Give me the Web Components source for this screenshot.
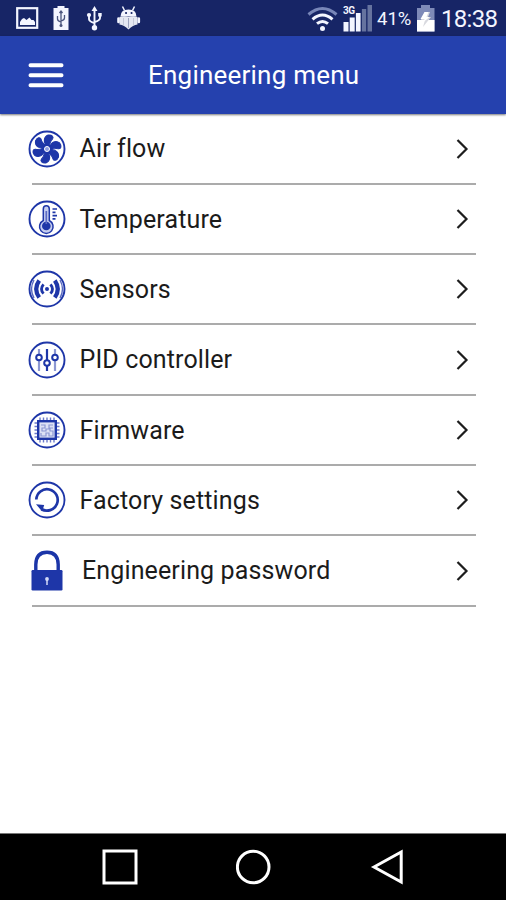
<!DOCTYPE html>
<html lang="en"><head><meta charset="utf-8"><title>Engineering menu</title>
<style>html,body{margin:0;height:100%;overflow:hidden;background:#fff;font-family:Roboto,"Liberation Sans",sans-serif}</style></head>
<body><engineering-app></engineering-app>
<script>
const define=(name,html)=>customElements.define(name,class extends HTMLElement{
  constructor(){super();this.attachShadow({mode:'open'}).innerHTML=html;}
});

define('status-bar',`<style>
:host{display:flex;height:36px;background:#172566;color:#f3f5ff;align-items:center;box-sizing:border-box;padding:0 9px 0 16px}
svg{display:block;flex:none}.gap{flex:1}
.pct{font-size:18.5px;line-height:36px;width:34px;margin:2px 6px 0 4px;white-space:nowrap}
.time{font-size:24px;line-height:36px;margin:2px 0 0 6px;white-space:nowrap;width:56px;letter-spacing:-.7px}
</style>
<svg width="126" height="36" viewBox="16 0 126 36" fill="none" stroke="#f3f5ff">
<rect x="17.2" y="8.2" width="20" height="19.6" stroke-width="2.2"/>
<path d="M20 25v-3l2-3 2-1 2.500 2 3-2.500 2 2.500 2 0 1.500 2v3z" fill="#f3f5ff" stroke="none"/>
<path d="M57.500 6h7v2h4v22h-15V8h4z" fill="#f3f5ff" stroke="none"/>
<path d="M61 11v15M57.500 16v3q0 2 3.500 3M64.500 15v3q0 2-3.500 3M59.500 13l1.500-2 1.500 2" stroke="#4c567f" stroke-width="1.300"/><circle cx="61" cy="25.500" r="1.500" fill="#4c567f" stroke="none"/>
<path d="M94.500 10v18M89 15.500v3.500q0 2.500 5.500 4M100 14.500v3.500q0 2.500-5.500 4" stroke-width="1.900"/>
<path d="M94.500 6l3 5h-6zM98.200 13h3.500v3.500h-3.500z" fill="#f3f5ff" stroke="none"/><circle cx="89" cy="15" r="2.100" fill="#f3f5ff" stroke="none"/><circle cx="94.500" cy="27.700" r="2.700" fill="#f3f5ff" stroke="none"/>
<path d="M120.500 16.500q0-7 8-7t8 7z" fill="#f3f5ff" stroke="none"/><path d="M124.500 10.500l-2-4M132.500 10.500l2-4" stroke-width="1.500"/>
<path d="M126 13h.1M131.500 13h.1" stroke="#172566" stroke-width="2" stroke-linecap="round"/>
<path d="M119.500 17q5-1.500 9 0 4.500-1.500 9 0v7.500q-4.500.500-9 5-4.500-4.500-9-5z" fill="#e4e7f2" stroke="none"/><path d="M118.500 18.500v3.500M138.800 18.500v3.500" stroke-width="2.600" stroke-linecap="round"/><path d="M128.500 18v10" stroke="#9ba2bd" stroke-width="1"/><path d="M123.500 18v7M133.500 18v7" stroke="#c3c8d8" stroke-width="1"/>
</svg><span class="gap"></span>
<svg width="66" height="36" viewBox="307 0 66 36" fill="none">
<path d="M308.500 14.500q14-12 28 0" stroke="#7886b8" stroke-width="3"/>
<path d="M312.500 19.300q10-8.500 20 0M317 23.700q5.500-4.500 11 0" stroke="#f3f5ff" stroke-width="3"/><circle cx="322.500" cy="28.500" r="2.500" fill="#f3f5ff"/>
<path d="M343.500 22h5v9.500h-5zM349.700 17.500h5v14h-5zM355.900 13h4.700v18.500h-4.700z" fill="#f3f5ff"/>
<path d="M361.900 9h4.300v22.500h-4.300zM367.500 5h4.500v26.500h-4.500z" fill="#66739f"/>
<text x="343" y="13.500" font-family="Roboto,sans-serif" font-size="10" font-weight="700" fill="#f3f5ff" textLength="12">3G</text>
</svg><span class="pct">41%</span>
<svg width="18" height="36" viewBox="417 0 18 36"><path d="M421 5h9v3h4.500v23.500h-17.500V8h4z" fill="#7e8ab8"/><path d="M417 20h17.500v11.500H417z" fill="#fff"/><path d="M425 12h5l-2 5h3l-8 10 2-7h-4z" fill="#d8d9df"/><path d="M424.500 12h4l-2 5h3l-6 5 1-3h-4z" fill="#fff"/></svg>
<span class="time">18:38</span>`);

define('app-header',`<style>
:host{display:grid;grid-template-columns:148px 1fr;height:78px;background:#2541ae;align-items:center;color:#fff;position:relative;box-shadow:0 1px 2px #0008}
svg{display:block;margin-left:28px}
h1{margin:0;font-size:26px;font-weight:400;line-height:34px;white-space:nowrap;letter-spacing:.22px}
</style><svg width="36" height="28" viewBox="0 0 36 28"><path d="M2.500 4.200h31M2.500 14.200h31M2.500 24.200h31" stroke="#fff" stroke-width="4" stroke-linecap="round"/></svg><h1><slot></slot></h1>`);

define('menu-row',`<style>
:host{display:block;height:70.33px}
.row{display:grid;grid-template-columns:38px 1fr 14px;column-gap:14px;height:100%;box-sizing:border-box;margin-left:28px;padding:0 36px 1.5px 0;align-items:center;background:linear-gradient(#ababab,#ababab) 3.500px 100%/444px 2px no-repeat}
.label{font-size:25px;line-height:34px;color:#1b1b1b;white-space:nowrap;padding:1px 0 0 var(--indent,0);letter-spacing:.13px}
.label{margin-left:-.5px}
svg{display:block}
</style><div class="row"><slot name="icon"></slot><span class="label"><slot></slot></span>
<svg width="14" height="22" viewBox="0 0 14 22"><path d="M1.500 2l9 9-9 9" fill="none" stroke="#1d1d1d" stroke-width="2.200"/></svg></div>`);

const blade='<path d="M18 16C13 13 12.800 8 16.500 5.200c3.500-1.500 6.300.2 5.200 2.800-1.500 2-1.600 4-.8 8z"/>';
const icons={
fan:`<g fill="#1e36a8">${[0,60,120,180,240,300].map(a=>`<g transform="rotate(${a+15} 19 19)">${blade}</g>`).join('')}<circle cx="19" cy="19" r="4.500"/></g><circle cx="19" cy="19" r="2.500" fill="#8e9ce0" stroke="#fff" stroke-width="1"/>`,
temp:`<path d="M15.300 20.500V9q0-3.200 3-3.200t3 3.200V20.500a6.800 6.800 0 1 1-6 0z" fill="#c5cdf0" stroke-width="1.500"/><circle cx="18.300" cy="26" r="4.300" fill="#1e36a8" stroke="none"/><path d="M18.300 11v13" stroke-width="1.700" stroke="#5b6bc4"/><path d="M24.500 9h4.500M24.500 12.300h3M24.500 15.600h4.500M24.500 18.900h3" stroke-width="1.700"/>`,
sensor:`<circle cx="19" cy="19" r="2" fill="#1e36a8" stroke="none"/><path d="M15.500 14.300q-4 4.700 0 9.400M22.500 14.300q4 4.700 0 9.400" stroke-width="2.800"/><path d="M11.200 10.500q-6 8.500 0 17M26.800 10.500q6 8.500 0 17" stroke-width="4.200"/><path d="M6 10q-5 9 0 18M32 10q5 9 0 18" stroke="#5868c0" stroke-width="1.400"/>`,
pid:`<path d="M11 8v6M11 19v11M27 8v6M27 19v11" stroke="#8d98d2" stroke-width="2.200"/><path d="M19 8v11M19 25v5" stroke-width="2.200"/><g stroke-width="2"><circle cx="11" cy="16.500" r="2.800"/><circle cx="19" cy="22" r="2.800"/><circle cx="27" cy="16.500" r="2.800"/></g>`,
chip:`<path d="M12 6.500v4M15.500 6.500v4M19 6.500v4M22.500 6.500v4M26 6.500v4M12 27.500v4M15.500 27.500v4M19 27.500v4M22.500 27.500v4M26 27.500v4M6.500 12h4M6.500 15.500h4M6.500 19h4M6.500 22.500h4M6.500 26h4M27.500 12h4M27.500 15.500h4M27.500 19h4M27.500 22.500h4M27.500 26h4" stroke-width="1.400" stroke="#6c7acb"/><rect x="10.200" y="10.200" width="17.600" height="17.600" fill="#dde1f5" stroke-width="2.400"/><path d="M13 14h4v3h-3v3h4v-2h3v-4h4M25 17h-3v3h3v5h-4v-3h-3v3h-5v-3" stroke-width="1.200" stroke="#8c97d3"/>`,
reset:`<path d="M8.300 18.500a10.700 10.700 0 1 1 5 9.500" stroke-width="2.700"/><path d="M8 23.200l8.200.8-2 6.500z" fill="#1e36a8" stroke="none"/>`
};
customElements.define('menu-icon',class extends HTMLElement{
 constructor(){super();this.attachShadow({mode:'open'});}
 connectedCallback(){
  const k=this.getAttribute('kind');
  const art=k==='lock'?`<svg width="38" height="42" viewBox="0 0 38 42"><path d="M7.800 21v-6.500Q8 2.300 19 2.300t11.200 12.200V21" fill="none" stroke="#1b35a8" stroke-width="3.400"/><rect x="3.500" y="20" width="31" height="20.500" rx="1.200" fill="#1e36a8"/><circle cx="19" cy="29" r="1.900" fill="#d3daf8"/><path d="M19 29v6" stroke="#d3daf8" stroke-width="1.500"/></svg>`
  :`<svg width="38" height="38" viewBox="0 0 38 38" fill="none" stroke="#1e36a8"><circle cx="19" cy="19" r="17.500" stroke-width="1.900"/>${icons[k]}</svg>`;
  this.shadowRoot.innerHTML=`<style>:host{display:block}svg{display:block}</style>`+art;
 }
});

define('nav-bar',`<style>
:host{display:flex;height:67px;background:#000;border-top:1px solid #777;box-sizing:border-box;justify-content:space-between;align-items:center;padding:0 101px 0 102px}
svg{display:block}
</style>
<svg width="36" height="36" viewBox="0 0 36 36"><rect x="2" y="2" width="32" height="32" fill="none" stroke="#fff" stroke-width="3"/></svg>
<svg width="36" height="36" viewBox="0 0 36 36"><circle cx="17.200" cy="18" r="15.800" fill="none" stroke="#fff" stroke-width="3"/></svg>
<svg width="36" height="36" viewBox="0 0 36 36"><path d="M5 18L32.200 3v30z" fill="none" stroke="#fff" stroke-width="3"/></svg>`);

define('engineering-app',`<style>
:host{display:flex;flex-direction:column;width:506px;height:900px;background:#fff}
main{flex:1;padding-top:.4px}nav-bar{flex:none}
</style><status-bar></status-bar><app-header>Engineering menu</app-header>
<main>
<menu-row><menu-icon slot="icon" kind="fan"></menu-icon>Air flow</menu-row>
<menu-row><menu-icon slot="icon" kind="temp"></menu-icon>Temperature</menu-row>
<menu-row><menu-icon slot="icon" kind="sensor"></menu-icon>Sensors</menu-row>
<menu-row><menu-icon slot="icon" kind="pid"></menu-icon>PID controller</menu-row>
<menu-row><menu-icon slot="icon" kind="chip"></menu-icon>Firmware</menu-row>
<menu-row><menu-icon slot="icon" kind="reset"></menu-icon>Factory settings</menu-row>
<menu-row style="--indent:2.5px"><menu-icon slot="icon" kind="lock"></menu-icon>Engineering password</menu-row>
</main><nav-bar></nav-bar>`);
</script></body></html>
